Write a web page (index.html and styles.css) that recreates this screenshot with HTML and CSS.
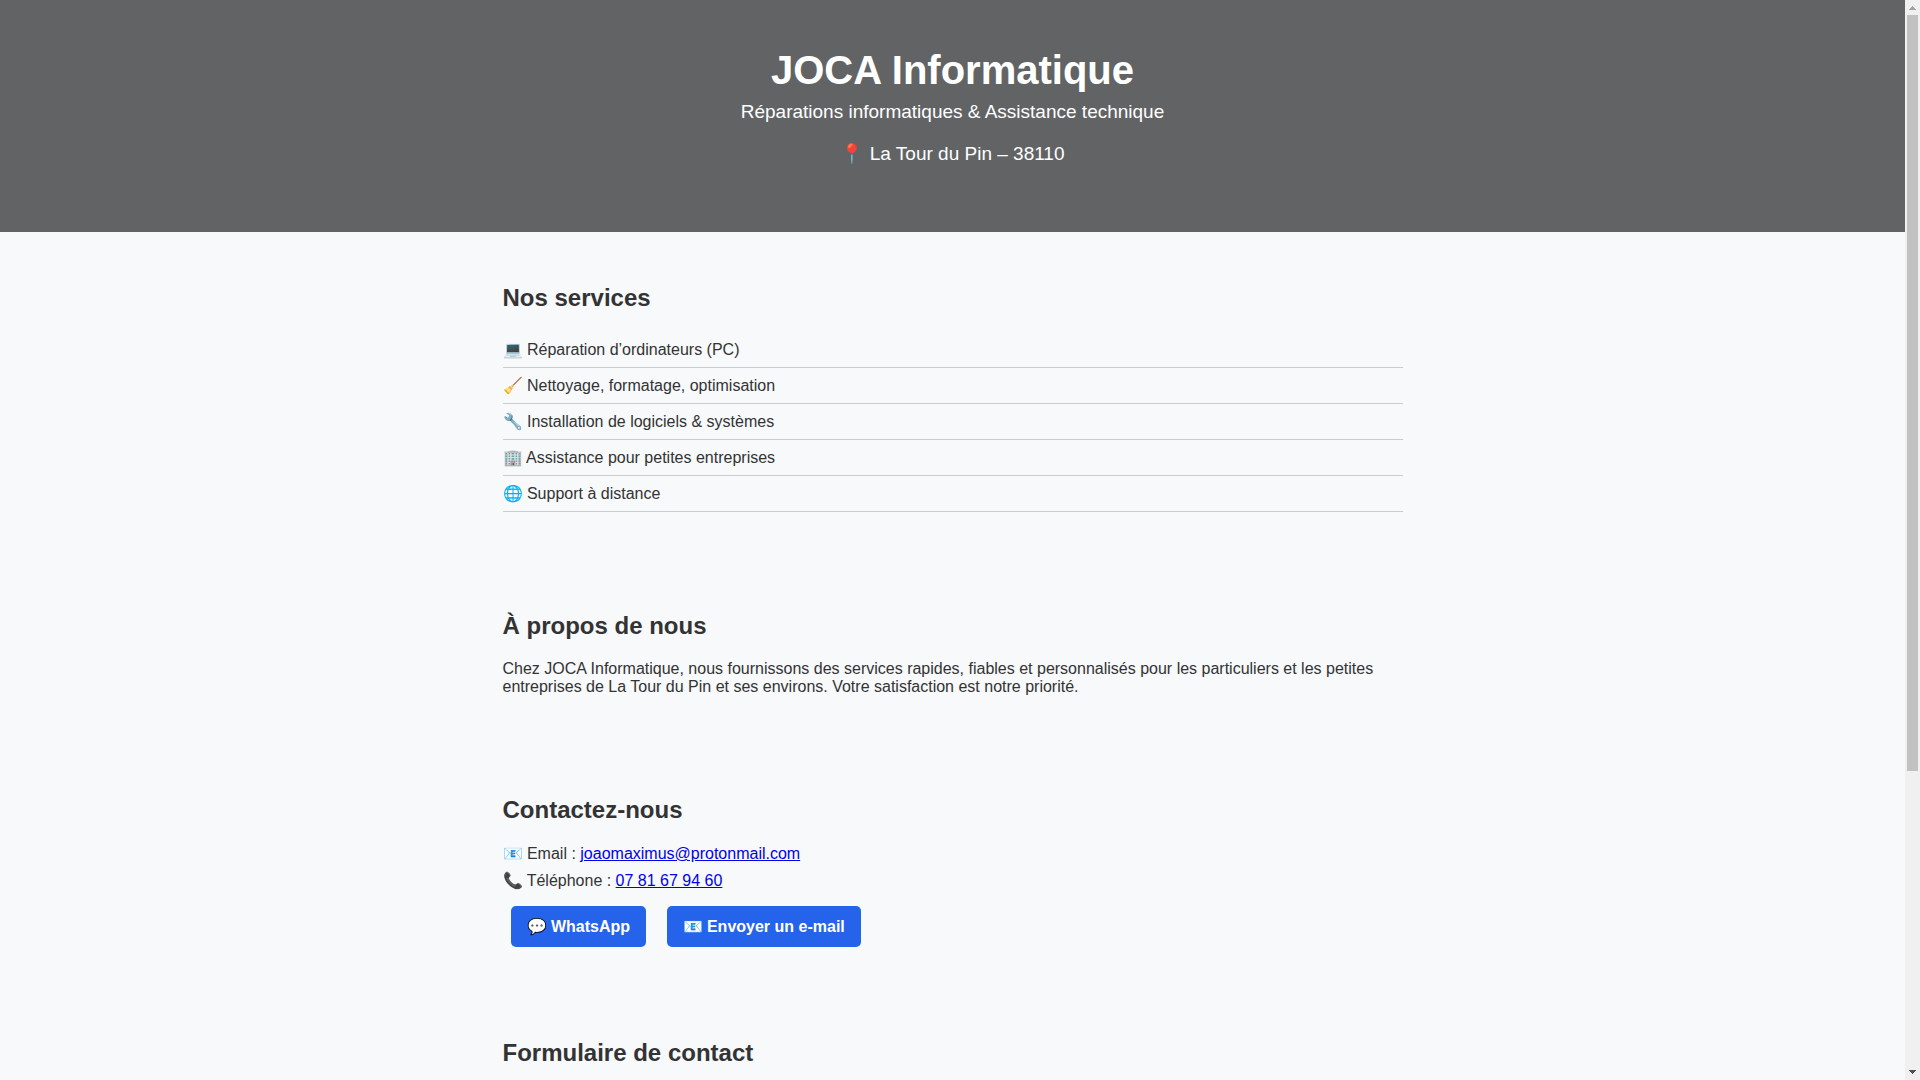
FILE: index.html
```html
<!DOCTYPE html>
<html lang="fr">
<head>
<meta charset="utf-8">
<title>JOCA Informatique</title>
<meta name="viewport" content="width=device-width, initial-scale=1">
<link rel="stylesheet" href="styles.css">
</head>
<body>
<header class="hero">
  <h1 class="hero-title">JOCA Informatique</h1>
  <p class="hero-text">Réparations informatiques &amp; Assistance technique</p>
  <p class="hero-text">📍 La Tour du Pin – 38110</p>
</header>
<main>
  <section class="section">
    <h2 class="section-title">Nos services</h2>
    <ul class="services">
      <li class="service">💻 Réparation d’ordinateurs (PC)</li>
      <li class="service">🧹 Nettoyage, formatage, optimisation</li>
      <li class="service">🔧 Installation de logiciels &amp; systèmes</li>
      <li class="service">🏢 Assistance pour petites entreprises</li>
      <li class="service">🌐 Support à distance</li>
    </ul>
  </section>
  <section class="section">
    <h2 class="section-title">À propos de nous</h2>
    <p>Chez JOCA Informatique, nous fournissons des services rapides, fiables et personnalisés pour les particuliers et les petites entreprises de La Tour du Pin et ses environs. Votre satisfaction est notre priorité.</p>
  </section>
  <section class="section">
    <h2 class="section-title">Contactez-nous</h2>
    <p class="contact-line">📧 Email : <a href="mailto:joaomaximus@protonmail.com">joaomaximus@protonmail.com</a></p>
    <p class="contact-line">📞 Téléphone : <a href="tel:+33781679460">07 81 67 94 60</a></p>
    <a class="btn" href="https://wa.me/33781679460">💬 WhatsApp</a>
    <a class="btn" href="mailto:joaomaximus@protonmail.com">📧 Envoyer un e-mail</a>
  </section>
  <section class="section">
    <h2 class="section-title">Formulaire de contact</h2>
  </section>
</main>
<div class="scrollbar" aria-hidden="true">
  <svg class="scroll-arrow scroll-arrow-up" viewBox="0 0 15 15" shape-rendering="crispEdges"><path d="M7 6h1v1h1v1h1v1h1v1H4V9h1V8h1V7h1z"/></svg>
  <div class="scroll-track"><div class="scroll-thumb"></div></div>
  <svg class="scroll-arrow" viewBox="0 0 15 15" shape-rendering="crispEdges"><path d="M4 5h7v1h-1v1H9v1H8v1H7V8H6V7H5V6H4z"/></svg>
</div>
</body>
</html>
```
FILE: styles.css
```css
body {
  margin: 0;
  padding-right: 15px;
  font-family: "Liberation Sans", Arial, sans-serif;
  background: #f7f9fb;
  color: #333;
}
.hero {
  padding: 48px 16px;
  background: #626365;
  color: #fff;
  text-align: center;
}
.hero-title {
  margin: 0;
  font-size: 40px;
}
.hero-text {
  margin: 8px 0 19px;
  font-size: 19px;
}
.section {
  max-width: 900px;
  margin: 0 auto;
  padding: 32px 16px;
}
.section-title {
  margin: 20px 0;
  font-size: 24px;
}
.services {
  margin: 0 0 16px;
  padding: 0;
  list-style: none;
}
.service {
  padding: 8px 0;
  border-bottom: 1px solid #ccc;
}
.contact-line {
  margin: 8px 0;
}
.btn {
  display: inline-block;
  margin: 8px;
  padding: 11px 16px;
  border-radius: 5px;
  background: #2563eb;
  color: #fff;
  font-weight: bold;
  text-decoration: none;
}
/* Slim page scrollbar, always over the right edge of the window */
.scrollbar {
  position: fixed;
  top: 0;
  right: 0;
  bottom: 0;
  display: flex;
  flex-direction: column;
  width: 15px;
  background: #f0f0f0;
}
.scroll-arrow {
  display: block;
  width: 15px;
  height: 15px;
  fill: #505050;
}
.scroll-arrow-up {
  fill: #a3a3a3;
}
.scroll-track {
  flex: 1;
  padding: 0 2px;
}
.scroll-thumb {
  height: 72%;
  background: #c1c1c1;
}
```
